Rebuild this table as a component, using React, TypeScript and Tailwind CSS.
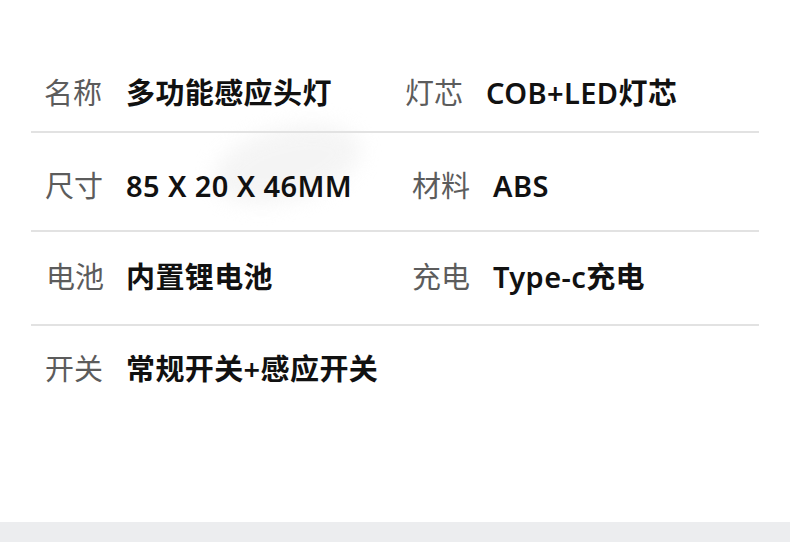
import React from "react";

const font = { fontFamily: '"Noto Sans", "Noto Sans CJK SC", sans-serif' };

function Cell({ label, value, labelW = "w-[82px]" }: { label: string; value: string; labelW?: string }) {
  return (
    <div className="flex items-center">
      <span className={`${labelW} shrink-0 text-[29px] leading-none text-[#5c5c5c] font-normal`}>{label}</span>
      <span className="text-[29px] leading-none text-[#111111] font-semibold tracking-[0.4px] whitespace-nowrap">{value}</span>
    </div>
  );
}

export default function App() {
  return (
    <div className="w-[790px] h-[542px] bg-white flex flex-col overflow-hidden relative" style={font}>
      <div className="absolute left-[212px] top-[128px] w-[150px] h-[72px] rounded-[50%] bg-[#eeeeee] opacity-60 blur-[10px] rotate-[-14deg]" />
      <div className="relative flex-1 px-[31px] pr-[31px]">
        <div className="h-[131px] flex items-end pb-[24px] pl-[13px]">
          <div className="w-[361px]"><Cell label="名称" value="多功能感应头灯" /></div>
          <Cell label="灯芯" value="COB+LED灯芯" labelW="w-[81px]" />
        </div>
        <div className="h-[2px] bg-[#e2e2e2]" />
        <div className="h-[97px] flex items-center pt-[7px] pl-[14px]">
          <div className="w-[367px]"><Cell label="尺寸" value="85 X 20 X 46MM" labelW="w-[81px]" /></div>
          <Cell label="材料" value="ABS" labelW="w-[81px]" />
        </div>
        <div className="h-[2px] bg-[#e2e2e2]" />
        <div className="h-[92px] flex items-center pb-[4px] pl-[15px]">
          <div className="w-[366px]"><Cell label="电池" value="内置锂电池" labelW="w-[80px]" /></div>
          <Cell label="充电" value="Type-c充电" labelW="w-[81px]" />
        </div>
        <div className="h-[2px] bg-[#e2e2e2]" />
        <div className="h-[88px] flex items-center pb-[4px] pl-[14px]">
          <Cell label="开关" value="常规开关+感应开关" labelW="w-[81px]" />
        </div>
      </div>
      <div className="h-[20px] bg-[#ecedef] shrink-0" />
    </div>
  );
}
